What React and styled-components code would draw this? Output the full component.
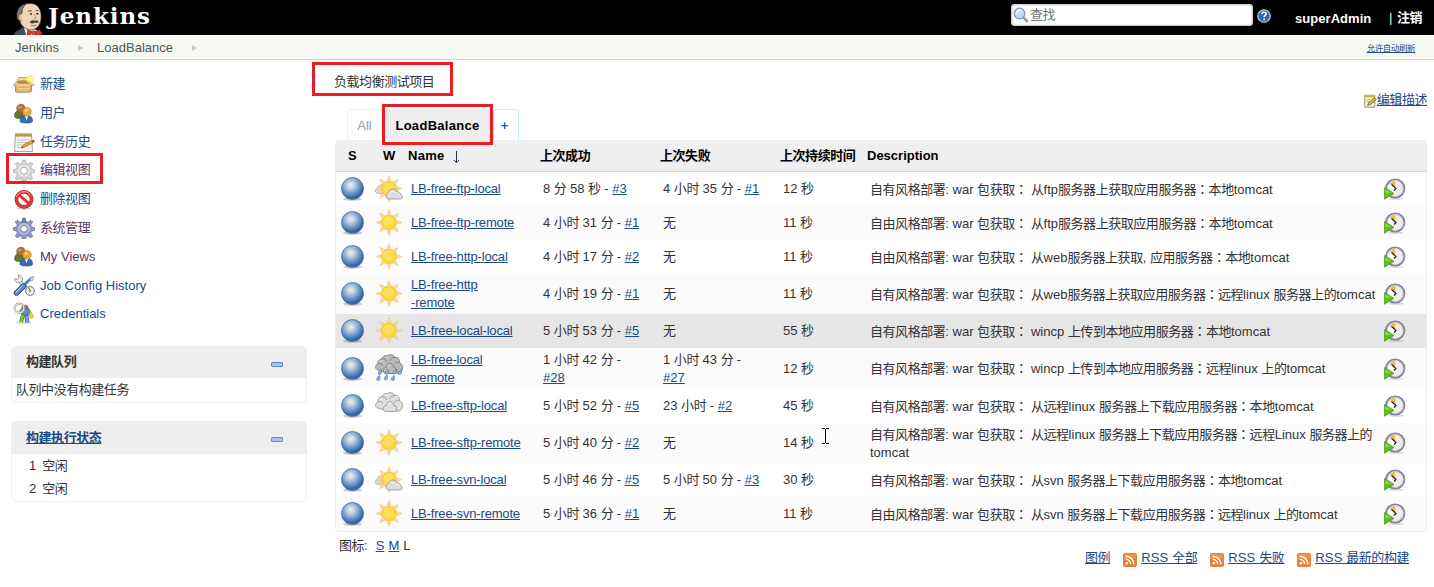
import React from "react";
import styled, { createGlobalStyle, css } from "styled-components";

const Global = createGlobalStyle`
  html, body { margin: 0; padding: 0; background: #fff; }
  body {
    font-family: "Liberation Sans", "Noto Sans CJK SC", sans-serif;
    font-size: 13px;
    line-height: 18px;
    color: #333;
    overflow: hidden;
  }
`;

/* ---------- text ---------- */

const Han = styled.span`
  letter-spacing: -0.45px;
`;
const WideColon = styled.span`
  font-family: "Noto Sans CJK TC", sans-serif;
  letter-spacing: -0.45px;
`;

function T({ children }) {
  const parts = String(children).split(/(：|[\u3001-\u9fff]+)/);
  return parts.map((p, i) => {
    if (p === "：") return <WideColon key={i}>{p}</WideColon>;
    return i % 2 ? <Han key={i}>{p}</Han> : p;
  });
}

const Link = styled.a`
  color: ${(p) => (p.$visited ? "#5c3566" : "#204a87")};
  text-decoration: ${(p) => (p.$plain ? "none" : "underline")};
  white-space: nowrap;
`;
const JobLink = styled(Link)`
  letter-spacing: -0.17px;
`;

const Mark = styled.span`
  position: absolute;
  top: ${(p) => p.$t}px;
  right: ${(p) => p.$r}px;
  bottom: ${(p) => p.$b}px;
  left: ${(p) => p.$l}px;
  border: 3px solid #ed1c24;
  pointer-events: none;
`;

/* ---------- page chrome ---------- */

const Page = styled.div`
  position: relative;
  width: 1434px;
  height: 587px;
  overflow: hidden;
  background: #fff;
`;
const TopBar = styled.header`
  display: flex;
  height: 35px;
  background: #000;
  color: #fff;
  font-weight: bold;
`;
const Brand = styled.div`
  display: flex;
  flex: 1;
  padding-left: 13px;
`;
const BrandName = styled.span`
  margin-left: 3px;
  font: bold 23px/32px "DejaVu Serif", serif;
  letter-spacing: 0.9px;
`;
const Search = styled.div`
  display: flex;
  align-items: center;
  box-sizing: border-box;
  width: 242px;
  height: 22px;
  margin-top: 4px;
  padding-left: 2px;
  gap: 1px;
  border-radius: 4px;
  background: #fff;
  box-shadow: inset 0 0 2px 1px #bbb;
  color: #757575;
  font-weight: normal;
`;
const HelpSlot = styled.div`
  width: 14px;
  margin: 9px 24px 0 4px;
`;
const User = styled.span`
  width: 94px;
  margin-top: 10px;
  letter-spacing: 0.05px;
`;
const Logout = styled.span`
  width: 45px;
  margin-top: 9px;
  white-space: nowrap;
`;
const Divider = styled.span`
  margin-right: 1px;
  font-weight: normal;
`;
const Crumbs = styled.nav`
  display: flex;
  align-items: center;
  box-sizing: border-box;
  height: 25px;
  padding: 1px 19px 0 15px;
  border-bottom: 1px solid #d3d7cf;
  background: #f6faf2;
  color: #4d545d;
`;
const CrumbArrow = styled.i`
  margin: 0 ${(p) => p.$gap}px 0 19px;
  border: 3.5px solid transparent;
  border-left: 5px solid #c4c8c0;
  border-right: 0;
`;
const Refresh = styled(Link)`
  margin-left: auto;
  font-size: 8.5px;
`;
const Columns = styled.div`
  display: flex;
`;

/* ---------- side panel ---------- */

const Side = styled.aside`
  width: 296px;
  padding: 10px 28px 0 11px;
`;
const Task = styled.div`
  position: relative;
  display: flex;
  align-items: center;
  height: 28.65px;
  padding-left: 2px;
  gap: 5px;
  width: 160px;
`;
const TaskLink = styled(Link)`
  margin-top: ${(p) => p.$drop}px;
`;
const Pane = styled.section`
  box-sizing: border-box;
  height: ${(p) => p.$h}px;
  margin-top: 18px;
  border: 1px solid #eee;
  border-radius: 5px;
  overflow: hidden;
`;
const PaneHead = styled.div`
  display: flex;
  align-items: center;
  justify-content: space-between;
  height: ${(p) => p.$h}px;
  padding: 0 23px 0 14px;
  background: #eee;
  font-weight: bold;
`;
const Collapse = styled.i`
  box-sizing: border-box;
  width: 12px;
  height: 5px;
  margin-top: 4px;
  border: 1px solid #5f8cc4;
  border-radius: 1px;
  background: #a9c4e6;
`;
const PaneText = styled.div`
  padding: 3px 4px;
`;
const Executor = styled.div`
  display: flex;
  gap: 6px;
  height: 23px;
  padding: 0 0 0 17px;
  line-height: 23px;
`;

/* ---------- main panel ---------- */

const Main = styled.main`
  width: 1092px;
`;
const Intro = styled.div`
  display: flex;
  justify-content: space-between;
  height: 49px;
`;
const Description = styled.div`
  position: relative;
  align-self: flex-start;
  margin: 13px 0 0 -1px;
`;
const EditLink = styled.div`
  display: flex;
  gap: 0;
  margin-top: 31px;
`;
const EditIcon = styled.span`
  padding-top: 3px;
`;
const Tabs = styled.div`
  display: flex;
  height: 31px;
  padding-left: 12px;
`;
const Tab = styled.div`
  position: relative;
  box-sizing: border-box;
  width: ${(p) => p.$w}px;
  border: 1px solid ${(p) => p.$line || "#eee"};
  border-bottom: 0;
  border-radius: 4px 4px 0 0;
  color: #999;
  text-align: center;
  line-height: 32px;
  ${(p) => p.$active && css`
    margin: 0 1px;
    background: #eee;
    color: #000;
    font-weight: bold;
    letter-spacing: 0.3px;
  `}
  ${(p) => p.$add && css`
    padding-right: 3px;
    color: #0b5cd6;
    font-weight: bold;
  `}
`;
const Table = styled.div`
  box-sizing: border-box;
  border: 1px solid #eee;
  border-top: 0;
  border-radius: 4px;
  overflow: hidden;
`;
const Row = styled.div`
  display: grid;
  grid-template-columns: 34px 37px 132px 120px 120px 87px 513px 47px;
  align-items: center;
  height: ${(p) => p.$h}px;
  background: ${(p) => (p.$hover ? "#e6e6e6" : p.$odd ? "#fbfbfb" : "#fff")};
`;
const HeadRow = styled(Row)`
  height: 31px;
  border-bottom: 1px solid #d5d5d5;
  background: #efefef;
  color: #000;
  font-weight: bold;
`;
const HeadCell = styled.div`
  display: flex;
  padding-left: ${(p) => (p.$pad ?? 1)}px;
  letter-spacing: ${(p) => p.$ls || 0}px;
  white-space: nowrap;
`;
const SortArrow = styled.svg`
  margin: 4px 0 0 8px;
`;
const Cell = styled.div`
  padding: 0 0 0 ${(p) => p.$pad ?? 4}px;
  white-space: nowrap;
`;
const IconCell = styled.div`
  padding: 0 0 ${(p) => p.$up || 0}px ${(p) => p.$pad}px;
  line-height: 0;
`;
const Foot = styled.div`
  display: flex;
  justify-content: space-between;
  padding: 5px 18px 0 4px;
`;
const Sizes = styled.div`
  display: flex;
  gap: 4px;
`;
const SizeLabel = styled.span`
  margin-right: 4px;
`;
const Feeds = styled.div`
  display: flex;
  margin-top: 12px;
  gap: 13px;
  letter-spacing: 0.15px;
`;
const Feed = styled.span`
  display: flex;
  gap: 4px;
  & > svg { margin-top: 4px; }
`;
const Caret = styled.svg`
  position: absolute;
  left: 821px;
  top: 428px;
`;

/* ---------- icons ---------- */

const Butler = () => (
  <svg width="32" height="35" viewBox="0 0 32 35">
    <path d="M1 35c.5-3 2-4 5-5l4-3 9 4 7-1c2 1 3 3 3.500 5z" fill="#335061" />
    <path d="M11 27l2 8h9l2-5z" fill="#f4f4f2" />
    <path d="M6.500 12C7 6 11 3.500 17 3.500c7 0 10.500 4.500 11 11 .4 5-.3 9-3.500 12.500-3 3-7 3.500-10.500 2-4-1.700-7-5-7.500-10z" fill="#efd5b8" stroke="#4a3f38" strokeWidth=".7" />
    <path d="M4.500 20C2.500 12 5 5.500 13 4c-3 2.500-4 5.500-4 9.500l-1.500 1 .5 5.500z" fill="#77767a" stroke="#2c2a2c" strokeWidth=".6" />
    <path d="M8 14.500c-2-.5-3 1-2.500 3 .4 2 1.500 4 3.500 3.500" fill="#e8c0a0" stroke="#7d5f4c" strokeWidth=".6" />
    <path d="M15 11.500c1.500-1.200 3-1.200 4-.2M22.500 11c1.200-1 2.500-.8 3.200.2" stroke="#5a4b41" fill="none" />
    <path d="M17 14h1.800M23.500 13.700h1.800" stroke="#1d1919" strokeWidth="1.400" />
    <path d="M21 13.500l2 5-2.500.3" fill="none" stroke="#b98f70" strokeWidth=".8" />
    <path d="M16.500 22.300c2-2.300 3.500-2.300 5.300-1.700 1.800-.4 3.200-.2 4 1.400-1.500 1.400-3 1.200-4 .6-1.600 1.400-3.400 1.300-5.300-.3z" fill="#45403e" />
    <path d="M18 25.200c2 .8 4 .7 5.500-.2" stroke="#9c6d55" fill="none" />
    <path d="M14.500 29.500l5 2.500-2.500 3h-3zM21 32l5.500-2.500 2 3.500-1 2H23z" fill="#e0322f" stroke="#8c1712" strokeWidth=".5" />
    <path d="M19 31h3v3.500h-3z" fill="#f04744" stroke="#8c1712" strokeWidth=".5" />
  </svg>
);

const Magnifier = () => (
  <svg width="16" height="16" viewBox="0 0 16 16">
    <path d="M10.500 10.500l3.500 3.500" stroke="#9a9c98" strokeWidth="2.600" strokeLinecap="round" />
    <circle cx="6.500" cy="6.500" r="5.300" fill="#c3dbf5" stroke="#8a9bb0" strokeWidth="1.300" />
    <path d="M3.500 6.500a3.500 3.500 0 0 1 4-3" stroke="#fff" strokeWidth="1.300" fill="none" />
  </svg>
);

const Help = () => (
  <svg width="14" height="14" viewBox="0 0 14 14">
    <circle cx="7" cy="7" r="6.200" fill="#3465a4" stroke="#b4cbe8" strokeWidth="1.300" />
    <path d="M4.900 5.200c0-1.500 1-2 2.100-2 1.300 0 2.100.8 2.100 1.800C9.100 6.500 7.100 6.400 7.100 8.200M7.100 9.600v1.500" stroke="#fff" strokeWidth="1.500" fill="none" />
  </svg>
);

const Box = () => (
  <svg width="22" height="22" viewBox="0 0 22 22">
    <ellipse cx="10.500" cy="19.500" rx="8" ry="1" fill="#000" opacity=".12" />
    <path d="M2.500 10h16v8q0 1-1 1h-14q-1 0-1-1z" fill="#e6ad60" stroke="#b5792b" strokeWidth=".8" />
    <path d="M3 11h15v2.500H3z" fill="#f3cb8d" />
    <path d="M4 9.500l2-5h9.500l2.500 5z" fill="#c08d4c" stroke="#a06c2a" strokeWidth=".6" />
    <path d="M2.500 9.500L.3 12.300h3.500l2-2.800zM18.500 9.500l3 2.800h-4l-2-2.800z" fill="#f6d7a5" stroke="#bd8538" strokeWidth=".6" />
    <path d="M3.500 8.500L6 4.500h10l-1 3H7.500z" fill="#f3d3a1" stroke="#c9994f" strokeWidth=".5" />
    <path d="M5 15.500h11M5 17.300h11" stroke="#f6d29c" strokeWidth=".9" />
    <circle cx="17" cy="6" r="4" fill="#fcf05a" opacity=".75" />
    <circle cx="17" cy="6" r="2" fill="#fffbb5" />
  </svg>
);

const People = () => (
  <svg width="22" height="22" viewBox="0 0 22 22">
    <path d="M1.500 14c0-4 2-5.500 6-5.500s6 1.500 6 5.500c0 2-2 2.500-6 2.500s-6-.5-6-2.500z" fill="#5f7a2c" stroke="#3d5715" strokeWidth=".6" />
    <circle cx="8" cy="6.500" r="4.300" fill="#a8743a" stroke="#7c5020" strokeWidth=".6" />
    <circle cx="7" cy="5.300" r="1.500" fill="#cf9c60" />
    <path d="M7 19c0-4 2.300-5.500 6.500-5.500s6 1.500 6 5.500c0 1.500-2 2-6 2S7 20.500 7 19z" fill="#3a6db5" stroke="#204a87" strokeWidth=".6" />
    <path d="M12 13.700h3.200l-1.600 4.500z" fill="#fff" />
    <circle cx="14" cy="9.800" r="4.300" fill="#f0a63c" stroke="#c9802a" strokeWidth=".6" />
    <circle cx="13" cy="8.500" r="1.600" fill="#fbd08a" />
  </svg>
);

const Notepad = () => (
  <svg width="22" height="22" viewBox="0 0 22 22">
    <path d="M2.500 3.500h16l1 17h-18z" fill="#f4f4f0" stroke="#a4a6a1" />
    <path d="M2 2.500h17v3H2z" fill="#a28c3a" />
    <path d="M3 1.800v3M5.500 1.800v3M8 1.800v3M10.500 1.800v3M13 1.800v3M15.500 1.800v3M18 1.800v3" stroke="#d9c46a" strokeWidth=".8" />
    <path d="M4 9h13M4 11.500h12M4 14h5M4 16.500h3" stroke="#b9bbb6" strokeWidth=".9" />
    <path d="M8 17l2-3 9-4.500 1.300 2.300-9 4.400z" fill="#e9a23b" stroke="#8f5902" strokeWidth=".6" />
    <path d="M18.500 9.500l2-1 1.200 2.200-1.500 1z" fill="#cc2b2b" />
    <path d="M8 17l1-1.600.9 1.300z" fill="#2e3436" />
  </svg>
);

const SmallNote = () => (
  <svg width="13" height="14" viewBox="0 0 13 14">
    <path d="M.8 1.500h10v11.700h-10z" fill="#f6f4e6" stroke="#8f8f86" />
    <path d="M.5.800h10.800v2.500H.5z" fill="#dcae3c" />
    <path d="M2.500 5.500h4M2.500 7.500h3" stroke="#babdb6" />
    <path d="M3.500 11.500l1-2.800 6-5 1.900 2-6 5z" fill="#edab3b" stroke="#7a5412" strokeWidth=".7" />
  </svg>
);

const Gear = ({ dark }) => (
  <svg width="22" height="22" viewBox="0 0 22 22">
    <ellipse cx="11" cy="20.500" rx="8" ry="1.300" fill="#000" opacity=".12" />
    <g fill={dark ? "#8f9cc6" : "#d8d9d7"} stroke={dark ? "#62719f" : "#a9aba8"} strokeWidth=".8">
      <path d="M9.800 1h2.400l.8 3.500 2 .8 3-2 1.700 1.700-2 3 .8 2 3.300.8v2.400l-3.300.8-.8 2 2 3-1.700 1.700-3-2-2 .8-.8 2.500H9.800L9 19.500l-2-.8-3 2L2.300 19l2-3-.8-2L.3 13.200v-2.400L3.500 10l.8-2-2-3L4 3.300l3 2 2-.8z" />
      <circle cx="11" cy="11.800" r="3.400" fill="#fff" />
    </g>
    <circle cx="11" cy="11.800" r="5" fill="none" stroke={dark ? "#c0c9e6" : "#eeefed"} strokeWidth="1.200" />
    {dark && <path d="M9.500 2h3l.8 4h-4.600z" fill="#5873a8" opacity=".7" />}
  </svg>
);

const Forbidden = () => (
  <svg width="22" height="22" viewBox="0 0 22 22">
    <ellipse cx="11" cy="20.500" rx="7" ry="1.200" fill="#000" opacity=".18" />
    <circle cx="11" cy="11.300" r="7.600" fill="#f7f3f3" stroke="#b01818" strokeWidth="3.500" />
    <circle cx="11" cy="11.300" r="7.600" fill="none" stroke="#e23b3b" strokeWidth="2.500" />
    <path d="M5.500 6.500l11 9.500" stroke="#dc2f2f" strokeWidth="2.800" />
    <path d="M3.500 9C5 5.500 8 3.700 11 3.700s5 1 6.500 3.500" fill="none" stroke="#f6a8a8" strokeWidth=".9" />
  </svg>
);

const Tools = () => (
  <svg width="22" height="22" viewBox="0 0 22 22">
    <path d="M6 6.500l11 11.500" stroke="#85878a" strokeWidth="3.600" />
    <path d="M6 6.500l11 11.500" stroke="#e4e6e8" strokeWidth="2" />
    <path d="M1.500 4.500L4.500 5.500 6 4 5 1c3 0 5 2 4.500 5L7 8.500C4 9 1.500 7.500 1.500 4.500z" fill="#eceded" stroke="#85878a" strokeWidth=".8" />
    <path d="M19 3.500L10 12" stroke="#5e7fae" strokeWidth="2.800" />
    <path d="M17 4l3-1.800 1 1L19.700 6.500 17.500 7z" fill="#d3d7dc" stroke="#6281a9" strokeWidth=".6" />
    <path d="M10.500 12L3.500 19" stroke="#204a87" strokeWidth="5.400" strokeLinecap="round" />
    <path d="M10.500 12L3.500 19" stroke="#6393cf" strokeWidth="3.600" strokeLinecap="round" />
    <path d="M9.500 11.500L3 18" stroke="#c0d6f0" strokeWidth="1" />
    <circle cx="17" cy="17" r="4.300" fill="#f3f3ee" stroke="#8a86a0" strokeWidth="1.200" />
    <path d="M17 17V13.300a4 4 0 0 0-2.500 1z" fill="#e9c84a" />
    <path d="M16 14.500l1.500 2.500-1.500 1.500" stroke="#222" fill="none" strokeWidth=".8" />
  </svg>
);

const Keys = () => (
  <svg width="22" height="22" viewBox="0 0 22 22">
    <ellipse cx="10" cy="20.500" rx="8" ry="1.300" fill="#000" opacity=".14" />
    <path d="M14 7l5.500 9" stroke="#c59a18" strokeWidth="4" />
    <path d="M14 7l5.500 9" stroke="#f3ce4a" strokeWidth="2.600" />
    <circle cx="12" cy="6.500" r="3.300" fill="#e4573f" stroke="#a3301e" strokeWidth=".6" />
    <path d="M10.500 11.500L8 20" stroke="#3f8a1a" strokeWidth="4" />
    <path d="M10.500 11.500L8 20" stroke="#73cf37" strokeWidth="2.600" />
    <circle cx="9.500" cy="9.500" r="2.800" fill="#73cf37" stroke="#3f8a1a" strokeWidth=".6" />
    <path d="M12.800 11l1.700 9.500" stroke="#2e5c9c" strokeWidth="4" />
    <path d="M12.800 11l1.700 9.500" stroke="#75a5dc" strokeWidth="2.600" />
    <circle cx="13" cy="10" r="3.700" fill="#5b8fd0" stroke="#2e5c9c" strokeWidth=".6" />
    <circle cx="6.300" cy="6.300" r="4.600" fill="none" stroke="#9a9c99" strokeWidth="2.300" />
    <circle cx="6.300" cy="6.300" r="4.600" fill="none" stroke="#eeefed" strokeWidth="1.100" />
  </svg>
);

const Ball = () => (
  <svg width="24" height="26" viewBox="0 0 24 26">
    <defs>
      <radialGradient id="ball" cx=".42" cy=".34" r=".66">
        <stop offset="0" stopColor="#f0f3e2" />
        <stop offset=".25" stopColor="#c0d2e2" />
        <stop offset=".6" stopColor="#6d97ca" />
        <stop offset=".88" stopColor="#3465a4" />
        <stop offset="1" stopColor="#3c69a5" />
      </radialGradient>
    </defs>
    <ellipse cx="12.500" cy="23" rx="9.500" ry="1.800" fill="#000" opacity=".2" />
    <circle cx="12.500" cy="12.500" r="11" fill="url(#ball)" stroke="#4470aa" strokeWidth=".8" />
  </svg>
);

const RAYS = [0, 45, 90, 135, 180, 225, 270, 315];
const SunShape = () => (
  <g>
    {RAYS.map((a) => (
      <path key={a} d="M14 .5l1.700 4.500h-3.400z" fill="#fbdc9a" stroke="#f3c27a" strokeWidth=".6" transform={`rotate(${a} 14 13.500)`} />
    ))}
    <circle cx="14" cy="13.500" r="7.600" fill="#ffd53e" stroke="#f9c057" strokeWidth="1" />
    <circle cx="13.500" cy="12.500" r="5" fill="#ffe05a" />
  </g>
);
const CLOUD = "M4 11C1.500 11 .5 9.500.5 8s1-2.700 2.700-3C3.300 2.500 5 1 7.300 1c1.900 0 3.200 1 3.700 2.600C13.500 3.500 15 5 15 6.600c1.500.3 2 1.300 2 2.200 0 1.400-1 2.200-2.500 2.200z";
const Sun = () => (
  <svg width="28" height="27" viewBox="0 0 28 27"><SunShape /></svg>
);
const SunCloud = () => (
  <svg width="28" height="27" viewBox="0 0 28 27">
    <path d={CLOUD} fill="#dcdcda" stroke="#a2a3a0" strokeWidth=".9" transform="translate(0 9) scale(.85)" />
    <SunShape />
    <path d={CLOUD} fill="#dcdcda" stroke="#999a97" strokeWidth=".9" transform="translate(10.500 13)" />
    <path d="M13.500 19.500c1-3.500 5-4.500 7-1M21 17.800c2-.5 3.500 1 3.500 2.500" stroke="#f8f8f7" fill="none" />
  </svg>
);
const CloudStack = ({ tone, edge }) => (
  <g fill={tone} stroke={edge} strokeWidth=".9">
    <path d="M3 16C1 15.500.5 14 .7 12.500 1 11 2 10 3 9.800 2.500 7 4.500 5 6.500 5 7.500 2.500 10 1 12.500 1.500 15-.2 19 .8 20 3.500c3-.3 5 2 4.500 5C26.500 9.500 27.500 11.500 27.300 14c.2 2.500-1 4.500-3.300 5H12z" />
    <path d="M3 9.800c2-.8 4 0 4.700 2M6.500 5c2.500-.5 4.500.5 5.500 3M20 3.500c-2.500 0-4.500 1-5 3.500M24.500 8.500c-2-1-4 0-5 2" fill="none" />
    <path d="M11.500 19.500c-2.500 0-3.500-1.500-3.300-3.200.2-1.800 1.500-2.800 3.300-2.800.3-2.500 1.500-4 3.500-4s3.500 1.500 3.700 4c1.800 0 3 1.300 3 3s-1.200 3-3 3z" />
    <path d="M12.500 13.500c.5-2 2-3 3.500-2.500M5 8c.5-1.500 1.500-2 2.500-1.500M10.500 4c1-1 2-1 3-.5" stroke="#fff" fill="none" opacity=".7" />
  </g>
);
const Cloudy = () => (
  <svg width="28" height="27" viewBox="0 0 28 27"><CloudStack tone="#dfdfdd" edge="#979895" /></svg>
);
const DROPS = [[4, 18], [11, 18], [19, 17.5], [24, 18], [2.5, 24], [10, 23.5], [17, 24]];
const Rain = () => (
  <svg width="28" height="28" viewBox="0 0 28 28">
    <CloudStack tone="#b9bab7" edge="#7b7d79" />
    {DROPS.map(([x, y]) => (
      <path key={`${x}-${y}`} d={`M${x + 2} ${y - 2.5}c.9 2.600.6 4.900-1.300 4.900-2.300 0-2-2.200 1.300-4.900z`} fill="#8fb3e0" stroke="#4a77b4" strokeWidth=".7" />
    ))}
  </svg>
);
const WEATHER = { sun: Sun, part: SunCloud, cloud: Cloudy, rain: Rain };

const Schedule = () => (
  <svg width="22" height="22" viewBox="0 0 22 22">
    <ellipse cx="12" cy="20.700" rx="7.500" ry="1.100" fill="#000" opacity=".15" />
    <circle cx="11.200" cy="10.500" r="9.200" fill="#eeeeea" stroke="#85829b" strokeWidth="1.800" />
    <circle cx="11.200" cy="10.500" r="7.800" fill="none" stroke="#cfcdd8" strokeWidth=".8" />
    <path d="M11.500 9.500L6 5.500a7.500 7.500 0 0 1 5-2.700z" fill="#e3c04a" />
    <path d="M4.500 9l3-2.500L11 10l-3 2.500z" fill="#fff" />
    <path d="M7.500 6.500l4.500 4-2 2" stroke="#222" strokeWidth="1.200" fill="none" />
    <path d="M.5 9.500v11.800l9.500-5.900z" fill="#5bbf1e" stroke="#48961a" strokeWidth=".7" />
    <path d="M1.300 11.200v4l5.700-.6z" fill="#8ada4a" />
  </svg>
);

const Rss = () => (
  <svg width="14" height="14" viewBox="0 0 14 14">
    <rect x=".3" y=".3" width="13.400" height="13.400" rx="2" fill="#ec7a2d" stroke="#d9641c" strokeWidth=".6" />
    <rect x="1" y="1" width="12" height="5" rx="1" fill="#f79a4d" opacity=".7" />
    <circle cx="3.900" cy="10.200" r="1.300" fill="#fff" />
    <path d="M2.700 6.300a5 5 0 0 1 5 5M2.700 3.200a8.200 8.200 0 0 1 8.200 8.200" stroke="#fff" strokeWidth="1.500" fill="none" />
  </svg>
);

/* ---------- data ---------- */

const TASKS = [
  { icon: <Box />, label: "新建" },
  { icon: <People />, label: "用户" },
  { icon: <Notepad />, label: "任务历史" },
  { icon: <Gear />, label: "编辑视图", visited: true, mark: true },
  { icon: <Forbidden />, label: "删除视图" },
  { icon: <Gear dark />, label: "系统管理", visited: true },
  { icon: <People />, label: "My Views", visited: true, drop: 2 },
  { icon: <Tools />, label: "Job Config History", drop: 2 },
  { icon: <Keys />, label: "Credentials", drop: 2 },
];

const JOBS = [
  { h: 34, w: "part", name: ["LB-free-ftp-local"], ok: ["8 分 58 秒", "#3"], bad: ["4 小时 35 分", "#1"], dur: "12 秒", desc: ["自有风格部署: war 包获取： 从ftp服务器上获取应用服务器：本地tomcat"] },
  { h: 34, w: "sun", name: ["LB-free-ftp-remote"], ok: ["4 小时 31 分", "#1"], dur: "11 秒", desc: ["自由风格部署: war 包获取： 从ftp服务器上获取应用服务器：本地tomcat"] },
  { h: 34, w: "sun", name: ["LB-free-http-local"], ok: ["4 小时 17 分", "#2"], dur: "11 秒", desc: ["自由风格部署: war 包获取： 从web服务器上获取, 应用服务器：本地tomcat"] },
  { h: 40, w: "sun", name: ["LB-free-http", "-remote"], ok: ["4 小时 19 分", "#1"], dur: "11 秒", desc: ["自有风格部署: war 包获取： 从web服务器上获取应用服务器：远程linux 服务器上的tomcat"] },
  { h: 34, w: "sun", hover: true, name: ["LB-free-local-local"], ok: ["5 小时 53 分", "#5"], dur: "55 秒", desc: ["自有风格部署: war 包获取： wincp 上传到本地应用服务器：本地tomcat"] },
  { h: 41, w: "rain", name: ["LB-free-local", "-remote"], ok: ["1 小时 42 分", "#28", true], bad: ["1 小时 43 分", "#27", true], dur: "12 秒", desc: ["自有风格部署: war 包获取： wincp 上传到本地应用服务器：远程linux 上的tomcat"] },
  { h: 34, w: "cloud", name: ["LB-free-sftp-local"], ok: ["5 小时 52 分", "#5"], bad: ["23 小时", "#2"], dur: "45 秒", desc: ["自有风格部署: war 包获取： 从远程linux 服务器上下载应用服务器：本地tomcat"] },
  { h: 40, w: "sun", name: ["LB-free-sftp-remote"], ok: ["5 小时 40 分", "#2"], dur: "14 秒", desc: ["自有风格部署: war 包获取： 从远程linux 服务器上下载应用服务器：远程Linux 服务器上的", "tomcat"] },
  { h: 34, w: "part", name: ["LB-free-svn-local"], ok: ["5 小时 46 分", "#5"], bad: ["5 小时 50 分", "#3"], dur: "30 秒", desc: ["自有风格部署: war 包获取： 从svn 服务器上下载应用服务器：本地tomcat"] },
  { h: 34, w: "sun", name: ["LB-free-svn-remote"], ok: ["5 小时 36 分", "#1"], dur: "11 秒", desc: ["自由风格部署: war 包获取： 从svn 服务器上下载应用服务器：远程linux 上的tomcat"] },
];

function Build({ value }) {
  if (!value) return <T>无</T>;
  const [when, id, wrap] = value;
  return (
    <>
      <T>{`${when} - `}</T>
      {wrap && <br />}
      <Link>{id}</Link>
    </>
  );
}

function JobRow({ job, odd }) {
  const Weather = WEATHER[job.w];
  return (
    <Row $h={job.h} $odd={odd} $hover={job.hover}>
      <IconCell $pad={4}><Ball /></IconCell>
      <IconCell $pad={5} $up={2}><Weather /></IconCell>
      <Cell>
        {job.name.map((n) => <div key={n}><JobLink>{n}</JobLink></div>)}
      </Cell>
      <Cell><Build value={job.ok} /></Cell>
      <Cell><Build value={job.bad} /></Cell>
      <Cell><T>{job.dur}</T></Cell>
      <Cell>
        {job.desc.map((d) => <div key={d}><T>{d}</T></div>)}
      </Cell>
      <IconCell $pad={5}><Schedule /></IconCell>
    </Row>
  );
}

export default function App() {
  return (
    <Page>
      <Global />
      <TopBar>
        <Brand>
          <Butler />
          <BrandName>Jenkins</BrandName>
        </Brand>
        <Search><Magnifier /><T>查找</T></Search>
        <HelpSlot><Help /></HelpSlot>
        <User>superAdmin</User>
        <Logout><Divider>|</Divider> <T>注销</T></Logout>
      </TopBar>
      <Crumbs>
        <span>Jenkins</span>
        <CrumbArrow $gap={14} />
        <span>LoadBalance</span>
        <CrumbArrow $gap={14} />
        <Refresh><T>允许自动刷新</T></Refresh>
      </Crumbs>
      <Columns>
        <Side>
          {TASKS.map((t) => (
            <Task key={t.label}>
              {t.icon}
              <TaskLink $plain $visited={t.visited} $drop={t.drop || 0}><T>{t.label}</T></TaskLink>
              {t.mark && <Mark $t={-3} $r={70} $b={1} $l={-5} />}
            </Task>
          ))}
          <Pane $h={57}>
            <PaneHead $h={31}><T>构建队列</T><Collapse /></PaneHead>
            <PaneText><T>队列中没有构建任务</T></PaneText>
          </Pane>
          <Pane $h={81}>
            <PaneHead $h={32}><Link><T>构建执行状态</T></Link><Collapse /></PaneHead>
            <Executor><span>1</span><T>空闲</T></Executor>
            <Executor><span>2</span><T>空闲</T></Executor>
          </Pane>
        </Side>
        <Main>
          <Intro>
            <Description>
              <T>负载均衡测试项目</T>
              <Mark $t={-11} $r={-19} $b={-5} $l={-22} />
            </Description>
            <EditLink>
              <EditIcon><SmallNote /></EditIcon>
              <Link><T>编辑描述</T></Link>
            </EditLink>
          </Intro>
          <Tabs>
            <Tab $w={35}>All</Tab>
            <Tab $w={109} $active>
              LoadBalance
              <Mark $t={-6} $r={-2} $b={-5} $l={-2} />
            </Tab>
            <Tab $w={26} $add $line="#cfe9fb">+</Tab>
          </Tabs>
          <Table>
            <HeadRow>
              <HeadCell $pad={12}>S</HeadCell>
              <HeadCell $pad={13}>W</HeadCell>
              <HeadCell $ls={0.3}>
                Name
                <SortArrow width="7" height="13" viewBox="0 0 7 13">
                  <path d="M3.500 0v11M1 9l2.500 2.700L6 9" fill="none" stroke="#1f3350" />
                </SortArrow>
              </HeadCell>
              <HeadCell><T>上次成功</T></HeadCell>
              <HeadCell><T>上次失败</T></HeadCell>
              <HeadCell><T>上次持续时间</T></HeadCell>
              <HeadCell>Description</HeadCell>
            </HeadRow>
            {JOBS.map((j, i) => <JobRow key={i} job={j} odd={i % 2 === 1} />)}
          </Table>
          <Foot>
            <Sizes>
              <SizeLabel><T>图标:</T></SizeLabel>
              <Link>S</Link><Link>M</Link><span>L</span>
            </Sizes>
            <Feeds>
              <Link><T>图例</T></Link>
              <Feed><Rss /><Link><T>RSS 全部</T></Link></Feed>
              <Feed><Rss /><Link><T>RSS 失败</T></Link></Feed>
              <Feed><Rss /><Link><T>RSS 最新的构建</T></Link></Feed>
            </Feeds>
          </Foot>
        </Main>
      </Columns>
      <Caret width="9" height="16" viewBox="0 0 9 16">
        <path d="M1 .5h3M5 .5h3M4.500 1v14M1 15.500h3M5 15.500h3" stroke="#000" fill="none" />
      </Caret>
    </Page>
  );
}
